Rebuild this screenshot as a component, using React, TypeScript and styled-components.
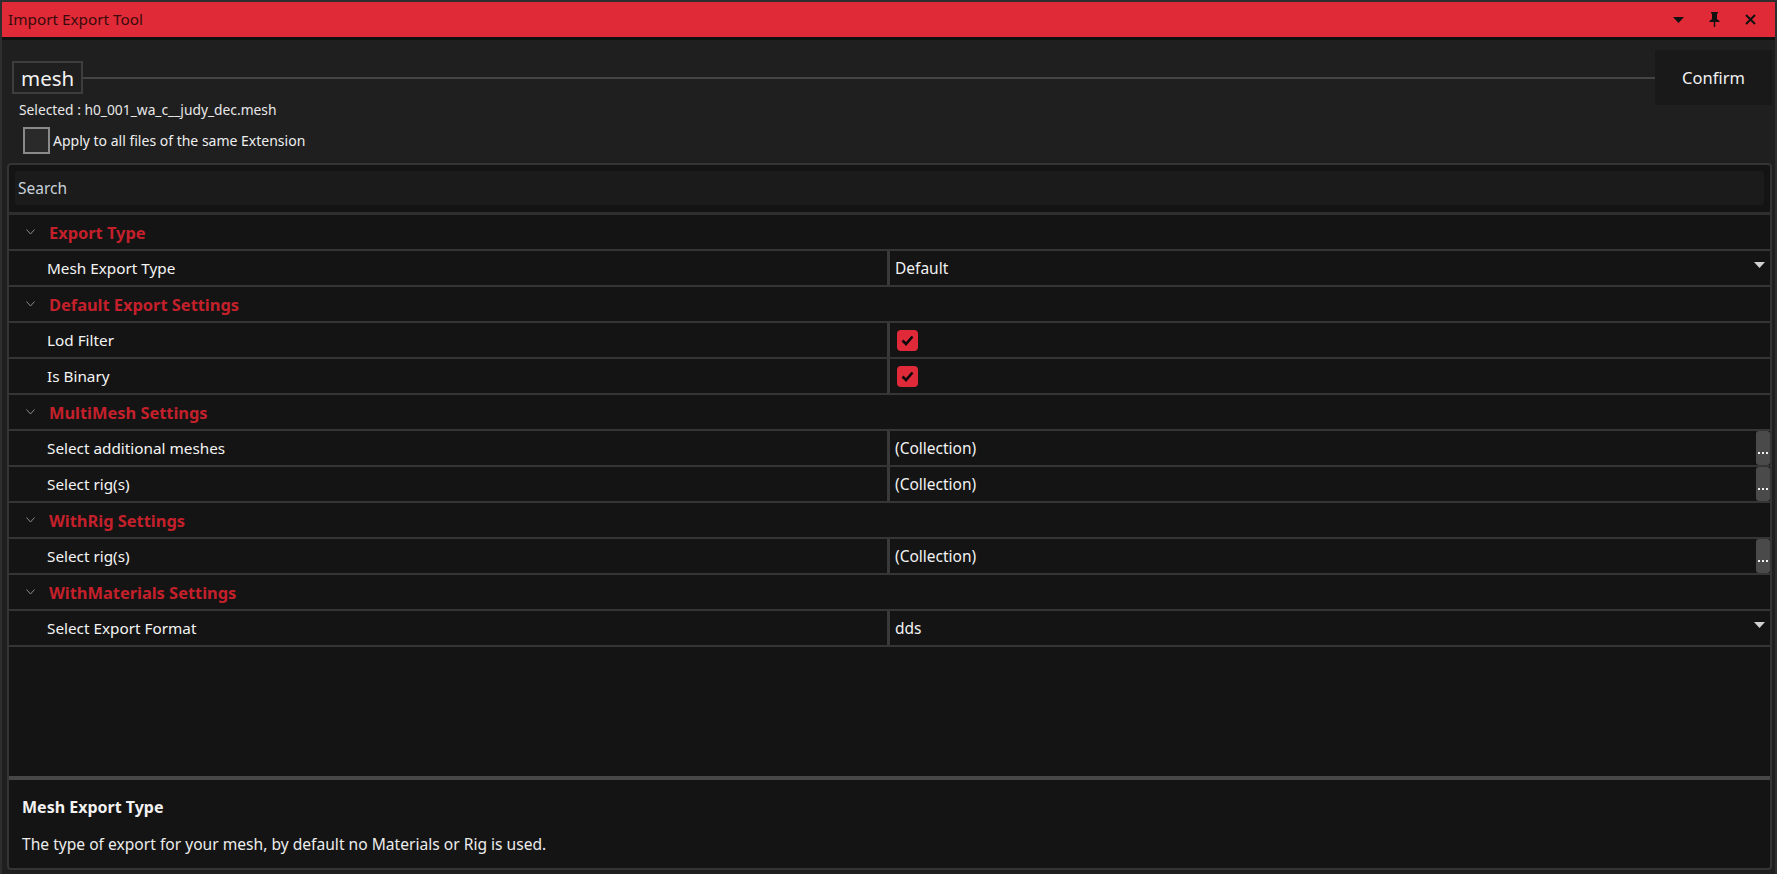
import React from "react";
import styled, { createGlobalStyle } from "styled-components";

const GlobalStyle = createGlobalStyle`
  html, body {
    margin: 0;
    padding: 0;
    background: #1f1f1f;
  }
  * {
    box-sizing: border-box;
  }
`;

const FONT = `"Noto Sans", "Open Sans", sans-serif`;

/* ---------- window chrome ---------- */
const Window = styled.div`
  width: 1777px;
  height: 874px;
  display: flex;
  flex-direction: column;
  background: #1f1f1f;
  border: 2px solid #2e2e2e;
  border-bottom: none;
  font-family: ${FONT};
  color: #f0f0f0;
  overflow: hidden;
`;

const TitleBar = styled.div`
  height: 38px;
  flex: none;
  display: flex;
  align-items: center;
  background: #e02a37;
  border-bottom: 3px solid #111;
  padding: 0 0 0 6px;
`;

const TitleText = styled.div`
  flex: 1;
  font-size: 15.3px;
  color: #3a0a0c;
  padding-bottom: 1px;
`;

const TitleButtons = styled.div`
  display: flex;
  align-items: center;
  gap: 25px;
  padding-right: 19px;
  color: #111;
`;

const TitleIcon = styled.svg`
  display: block;
`;

/* ---------- header ---------- */
const Header = styled.div`
  flex: none;
  display: flex;
  flex-direction: column;
  padding: 10px 3px 0 10px;
`;

const HeaderRow = styled.div`
  display: flex;
  align-items: center;
  height: 55px;
`;

const ExtensionBox = styled.div`
  border: 2px solid #3d3d3d;
  padding: 0 7px;
  height: 33px;
  display: flex;
  align-items: center;
  font-size: 20.5px;
  color: #f2f2f2;
`;

const HeaderLine = styled.div`
  flex: 1;
  height: 2px;
  background: #444446;
`;

const ConfirmButton = styled.button`
  width: 117px;
  height: 55px;
  border: none;
  background: #191919;
  color: #f2f2f2;
  font-family: ${FONT};
  font-size: 16.5px;
  cursor: pointer;
`;

const SelectedText = styled.div`
  font-size: 13.8px;
  color: #e8e8e8;
  margin: -5px 0 0 7px;
  line-height: 20px;
`;

const ApplyRow = styled.label`
  display: flex;
  align-items: center;
  gap: 3px;
  margin: 7px 0 0 11px;
  font-size: 14px;
  color: #eee;
`;

const SquareBox = styled.span`
  width: 27px;
  height: 27px;
  border: 2px solid #8a8a8a;
  background: #2a2a2a;
`;

/* ---------- property grid panel ---------- */
const Panel = styled.div`
  flex: 1;
  margin: 9px 3px 4px 5px;
  border: 2px solid #343434;
  border-radius: 4px;
  background: #141414;
  display: flex;
  flex-direction: column;
  min-height: 0;
`;

const SearchWrap = styled.div`
  padding: 6px 6px 7px;
  border-bottom: 3px solid #2e2e2e;
`;

const SearchBox = styled.div`
  height: 34px;
  background: #1b1b1b;
  border-radius: 3px;
  display: flex;
  align-items: center;
  padding-left: 3px;
  font-size: 15.5px;
  color: #c9d2dc;
`;

const Rows = styled.div`
  flex: 1;
  display: flex;
  flex-direction: column;
`;

const CategoryRow = styled.div`
  height: 36px;
  display: flex;
  align-items: center;
  border-bottom: 2px solid #353535;
`;

const Chevron = styled.svg`
  margin: 0 0 0 17px;
  width: 9px;
  height: 6px;
`;

const CategoryTitle = styled.div`
  margin-left: 14px;
  font-size: 16.4px;
  font-weight: 700;
  color: #c4202b;
`;

const PropRow = styled.div`
  height: 36px;
  display: grid;
  grid-template-columns: 878px 3px 1fr;
  border-bottom: 2px solid #353535;
`;

const PropLabel = styled.div`
  display: flex;
  align-items: center;
  padding-left: 38px;
  font-size: 15.3px;
  color: #f4f4f4;
`;

const ColumnSplit = styled.div`
  background: #3a3a3a;
`;

const PropValue = styled.div`
  position: relative;
  display: flex;
  align-items: center;
  padding-left: 5px;
  font-size: 15.5px;
  color: #f2f2f2;
`;

const CheckMark = styled.span`
  width: 21px;
  height: 21px;
  margin-left: 2px;
  border-radius: 4px;
  background: #e02a3a;
  display: flex;
  align-items: center;
  justify-content: center;
`;

const DropArrow = styled.svg`
  position: absolute;
  right: 5px;
  top: 11px;
`;

const EllipsisButton = styled.span`
  position: absolute;
  right: 0;
  top: 0;
  bottom: 0;
  width: 14px;
  border-radius: 3px;
  background: #4a4a4a;
  display: flex;
  align-items: flex-end;
  justify-content: center;
  padding-bottom: 11px;
`;

const EmptyArea = styled.div`
  flex: 1;
`;

const Splitter = styled.div`
  height: 4px;
  background: #474747;
  flex: none;
`;

const Description = styled.div`
  height: 88px;
  flex: none;
  padding: 16px 0 0 13px;
`;

const DescTitle = styled.div`
  font-size: 16px;
  font-weight: 700;
  color: #f2f2f2;
`;

const DescText = styled.div`
  margin-top: 15px;
  font-size: 15.6px;
  color: #ececec;
`;

type Value =
  | { kind: "text"; text: string; dropdown?: boolean; more?: boolean }
  | { kind: "check" };

type Section = {
  title: string;
  props: { label: string; value: Value }[];
};

const sections: Section[] = [
  {
    title: "Export Type",
    props: [
      {
        label: "Mesh Export Type",
        value: { kind: "text", text: "Default", dropdown: true },
      },
    ],
  },
  {
    title: "Default Export Settings",
    props: [
      { label: "Lod Filter", value: { kind: "check" } },
      { label: "Is Binary", value: { kind: "check" } },
    ],
  },
  {
    title: "MultiMesh Settings",
    props: [
      {
        label: "Select additional meshes",
        value: { kind: "text", text: "(Collection)", more: true },
      },
      {
        label: "Select rig(s)",
        value: { kind: "text", text: "(Collection)", more: true },
      },
    ],
  },
  {
    title: "WithRig Settings",
    props: [
      {
        label: "Select rig(s)",
        value: { kind: "text", text: "(Collection)", more: true },
      },
    ],
  },
  {
    title: "WithMaterials Settings",
    props: [
      {
        label: "Select Export Format",
        value: { kind: "text", text: "dds", dropdown: true },
      },
    ],
  },
];

function ValueCell({ value }: { value: Value }) {
  if (value.kind === "check") {
    return (
      <PropValue>
        <CheckMark>
          <svg width="13" height="11" viewBox="0 0 13 11">
            <path
              d="M1.5 5.5 L5 9 L11.5 1.5"
              fill="none"
              stroke="#0a0a0a"
              strokeWidth="2.6"
            />
          </svg>
        </CheckMark>
      </PropValue>
    );
  }
  return (
    <PropValue>
      {value.text}
      {value.dropdown && (
        <DropArrow width="11" height="6" viewBox="0 0 11 6">
          <path d="M0 0 H11 L5.5 6 Z" fill="#d0d0d0" />
        </DropArrow>
      )}
      {value.more && (
        <EllipsisButton>
          <svg width="10" height="2" viewBox="0 0 10 2">
            <rect x="0" y="0" width="2" height="2" fill="#f0f0f0" />
            <rect x="4" y="0" width="2" height="2" fill="#f0f0f0" />
            <rect x="8" y="0" width="2" height="2" fill="#f0f0f0" />
          </svg>
        </EllipsisButton>
      )}
    </PropValue>
  );
}

export default function App() {
  return (
    <>
      <GlobalStyle />
      <Window>
        <TitleBar>
          <TitleText>Import Export Tool</TitleText>
          <TitleButtons>
            <TitleIcon width="11" height="6" viewBox="0 0 11 6">
              <path d="M0 0 H11 L5.5 6 Z" fill="#111" />
            </TitleIcon>
            <TitleIcon width="11" height="15" viewBox="0 0 11 15">
              <path
                d="M2 0 H9 V1.5 H8 V7 L10.5 9 V10 H6.2 V15 H4.8 V10 H0.5 V9 L3 7 V1.5 H2 Z"
                fill="#111"
              />
            </TitleIcon>
            <TitleIcon width="11" height="11" viewBox="0 0 11 11">
              <path
                d="M1 1 L10 10 M10 1 L1 10"
                stroke="#111"
                strokeWidth="2"
              />
            </TitleIcon>
          </TitleButtons>
        </TitleBar>

        <Header>
          <HeaderRow>
            <ExtensionBox>mesh</ExtensionBox>
            <HeaderLine />
            <ConfirmButton>Confirm</ConfirmButton>
          </HeaderRow>
          <SelectedText>Selected : h0_001_wa_c__judy_dec.mesh</SelectedText>
          <ApplyRow>
            <SquareBox />
            Apply to all files of the same Extension
          </ApplyRow>
        </Header>

        <Panel>
          <SearchWrap>
            <SearchBox>Search</SearchBox>
          </SearchWrap>
          <Rows>
            {sections.map((s) => (
              <React.Fragment key={s.title}>
                <CategoryRow>
                  <Chevron viewBox="0 0 9 6">
                    <path
                      d="M0.5 0.5 L4.5 5 L8.5 0.5"
                      fill="none"
                      stroke="#8a8a8a"
                      strokeWidth="1"
                    />
                  </Chevron>
                  <CategoryTitle>{s.title}</CategoryTitle>
                </CategoryRow>
                {s.props.map((p, i) => (
                  <PropRow key={s.title + i}>
                    <PropLabel>{p.label}</PropLabel>
                    <ColumnSplit />
                    <ValueCell value={p.value} />
                  </PropRow>
                ))}
              </React.Fragment>
            ))}
            <EmptyArea />
          </Rows>
          <Splitter />
          <Description>
            <DescTitle>Mesh Export Type</DescTitle>
            <DescText>
              The type of export for your mesh, by default no Materials or Rig
              is used.
            </DescText>
          </Description>
        </Panel>
      </Window>
    </>
  );
}
